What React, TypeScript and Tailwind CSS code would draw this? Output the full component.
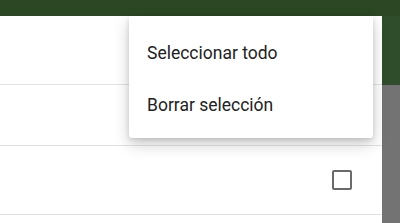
export default function App() {
  return (
    <div className="relative flex h-[223px] w-[400px] flex-col overflow-hidden bg-white font-['Roboto',sans-serif]">
      <div className="h-[16px] shrink-0 bg-[#2b4723]" />
      <div className="flex min-h-0 flex-1">
        <div className="flex w-[382px] flex-col">
          <div className="h-[69px] shrink-0 border-b border-[#e2e2e2]" />
          <div className="h-[61px] shrink-0 border-b border-[#e2e2e2]" />
          <div className="flex h-[69px] shrink-0 items-center justify-end border-b border-[#e2e2e2] pr-[30px]">
            <div className="h-[20px] w-[20px] rounded-[2px] border-2 border-[#6a6a6a]" />
          </div>
        </div>
        <div className="flex w-[18px] flex-col">
          <div className="h-[69px] shrink-0 bg-[#2f4d2a]" />
          <div className="flex-1 bg-[#737373]" />
        </div>
      </div>

      <div className="absolute left-[129px] top-[16px] w-[244px] rounded-b-[3px] bg-white pb-[7px] pt-[11px] shadow-[0_6px_16px_rgba(0,0,0,0.2),0_2px_5px_rgba(0,0,0,0.12)]">
        <div className="flex h-[52px] items-center px-[18px] text-[17.5px] text-[#222222]">
          Seleccionar todo
        </div>
        <div className="flex h-[52px] items-center px-[18px] text-[17.5px] text-[#222222]">
          Borrar selección
        </div>
      </div>
    </div>
  );
}
